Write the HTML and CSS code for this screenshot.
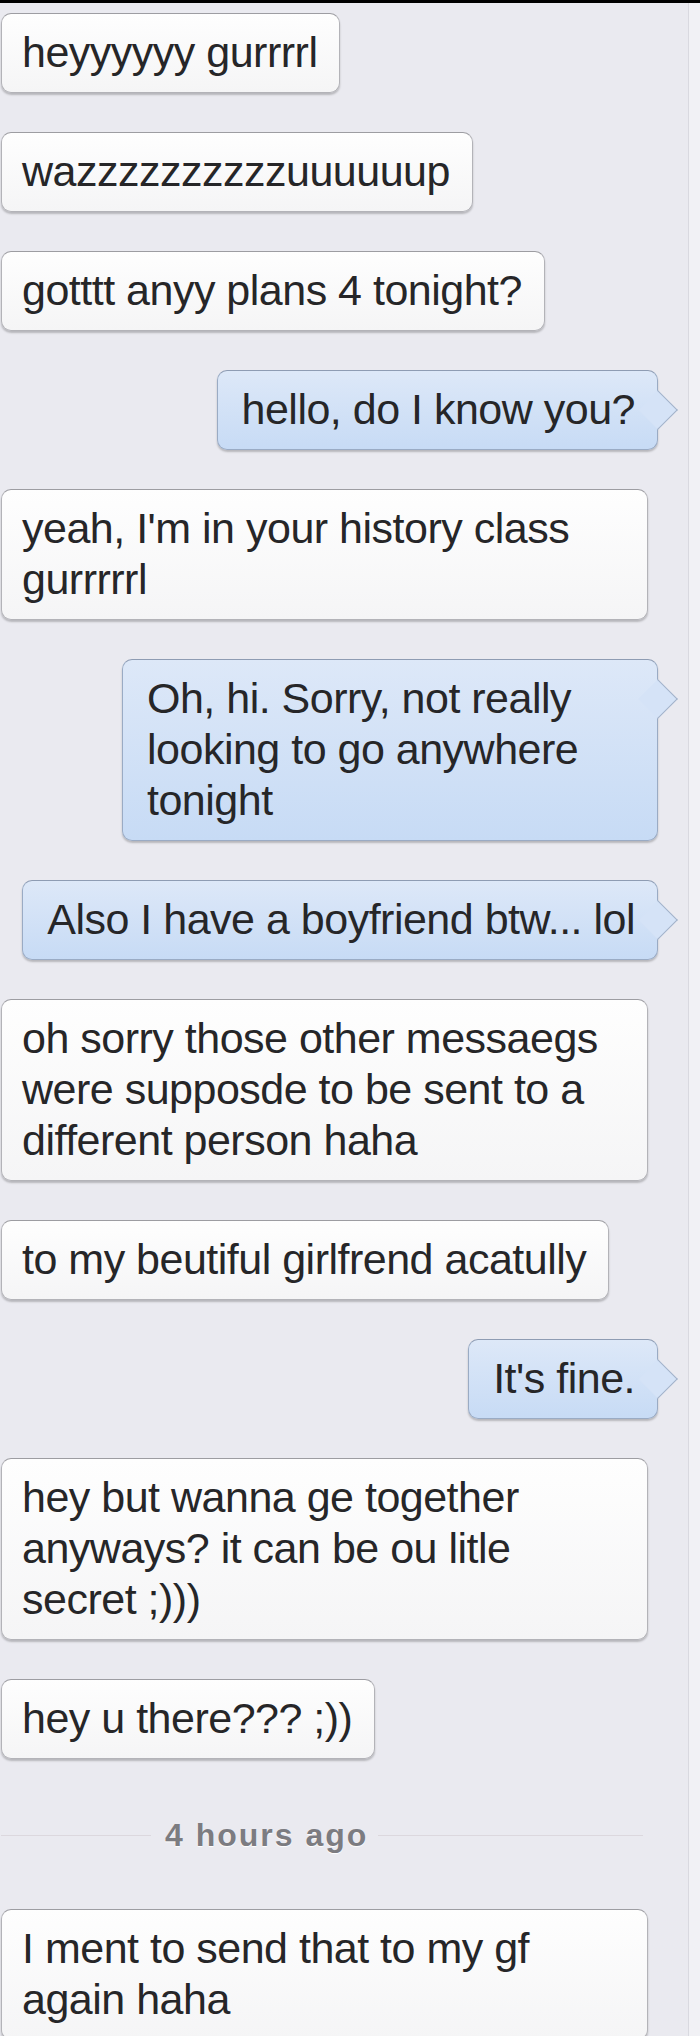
FILE: index.html
```html
<!DOCTYPE html>
<html lang="en">
<head>
    <meta charset="UTF-8">
    <title>Messages</title>
    <link rel="stylesheet" href="styles.css">
</head>
<body>

<div class="screen">
    <div class="chat">
        <div class="msg in">heyyyyyy gurrrrl</div>
        <div class="msg in">wazzzzzzzzzzuuuuuup</div>
        <div class="msg in">gotttt anyy plans 4 tonight?</div>
        <div class="msg out">hello, do I know you?</div>
        <div class="msg in wide">yeah, I'm in your history class<br>gurrrrrl</div>
        <div class="msg out fixed">Oh, hi. Sorry, not really<br>looking to go anywhere<br>tonight</div>
        <div class="msg out">Also I have a boyfriend btw... lol</div>
        <div class="msg in wide">oh sorry those other messaegs<br>were supposde to be sent to a<br>different person haha</div>
        <div class="msg in">to my beutiful girlfrend acatully</div>
        <div class="msg out">It's fine.</div>
        <div class="msg in wide">hey but wanna ge together<br>anyways? it can be ou litle<br>secret ;)))</div>
        <div class="msg in">hey u there??? ;))</div>

        <div class="stamp"><span>4 hours ago</span></div>

        <div class="msg in wide">I ment to send that to my gf<br>again haha</div>
    </div>
    <div class="edge"></div>
</div>

</body>
</html>
```

FILE: styles.css
```css
body{
    margin: 0;
    background: #eaeaf0;
    font-family: "Liberation Sans", Arial, sans-serif;
}
.screen{
    display: flex;
    min-height: 2033px;
    border-top: 3px solid #000;
}
.chat{
    flex: 1;
    display: flex;
    flex-direction: column;
    align-items: flex-start;
    gap: 39px;
    padding: 10px 30px 0 1px;
}
.edge{
    width: 11px;
    border-left: 1px solid #d9d9e0;
    background: #f1f1f5;
}

/* bubbles */
.msg{
    position: relative;
    padding: 13px 22px 14px 20px;
    font-size: 43px;
    line-height: 51px;
    letter-spacing: -0.5px;
    color: #262628;
    white-space: nowrap;
    border: 1px solid #b3b3b8;
    border-top-color: #9d9da2;
    border-radius: 10px;
    box-shadow: 0 2px 2px rgba(0, 0, 0, 0.22);
}
.msg.in{
    background: linear-gradient(#fefefe, #f5f5f6);
}
.msg.wide{
    align-self: stretch;
    margin-right: 10px;
}
.msg.out{
    align-self: flex-end;
    padding: 13px 22px 14px 24px;
    background: linear-gradient(#dde8f8, #c7dbf5);
    border-color: #9aabc4;
    border-top-color: #8e9cb3;
}
.msg.fixed{
    box-sizing: border-box;
    width: 536px;
}
.msg.out::after{
    content: "";
    position: absolute;
    top: 25px;
    right: -15px;
    width: 27px;
    height: 27px;
    background: #d5e3f7;
    border-top: 1px solid #a3b2c8;
    border-right: 1px solid #a3b2c8;
    transform: rotate(45deg);
}

/* time divider */
.stamp{
    align-self: stretch;
    display: flex;
    align-items: center;
    height: 40px;
    margin: 17px 15px 15px 0;
    font-size: 32px;
    font-weight: bold;
    letter-spacing: 2px;
    color: #7c7c81;
    text-shadow: 0 1px 1px #fff;
}
.stamp::before{
    content: "";
    width: 150px;
    margin-right: 14px;
    border-top: 1px solid #dcd8de;
}
.stamp::after{
    content: "";
    flex: 1;
    margin-left: 10px;
    border-top: 1px solid #dcd8de;
}
```
